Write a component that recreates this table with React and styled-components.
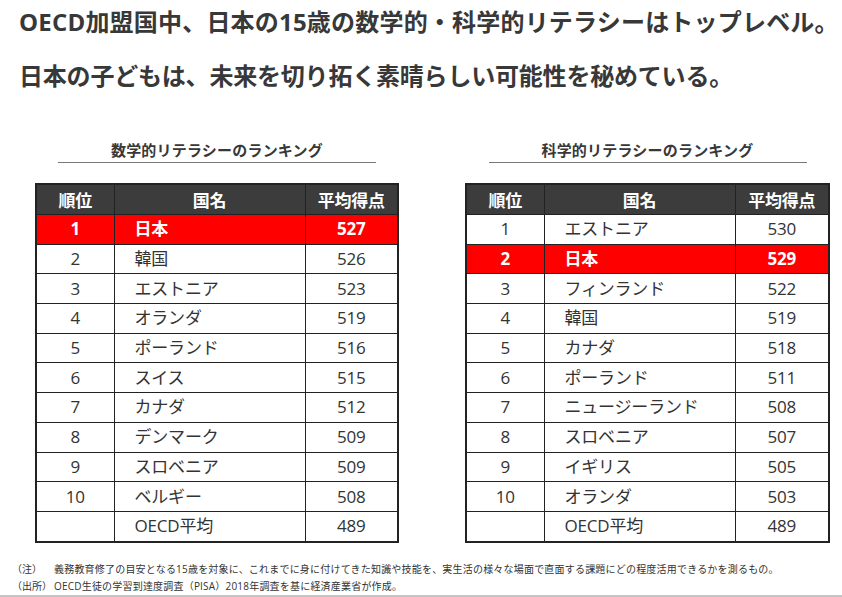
import React from "react"
import styled, { createGlobalStyle } from "styled-components"

const Global = createGlobalStyle`
  html, body {
    margin: 0;
    padding: 0;
    background: #fff;
  }
  body {
    font-family: "Open Sans", "Noto Sans CJK JP", sans-serif;
    color: #333;
  }
`

const Page = styled.div`
  width: 842px;
  height: 597px;
  display: flex;
  flex-direction: column;
  overflow: hidden;
`

const Headline = styled.div`
  padding: 5px 0 0 19px;
  display: flex;
  flex-direction: column;
  gap: 20px;
`

const HeadLine = styled.div`
  font-size: 24px;
  line-height: 34px;
  font-weight: 700;
  color: #383838;
  letter-spacing: ${(p) => p.ls}px;
  white-space: nowrap;
`

const Columns = styled.div`
  display: flex;
  gap: 66px;
  padding-left: 35px;
  margin-top: 47px;
`

const Group = styled.div`
  width: ${(p) => p.w}px;
  display: flex;
  flex-direction: column;
  align-items: center;
`

const GroupTitle = styled.div`
  width: 318px;
  text-align: center;
  font-size: 15px;
  line-height: 20px;
  font-weight: 700;
  color: #383838;
  padding-bottom: 2px;
  border-bottom: 1.5px solid #777;
  letter-spacing: 0.2px;
`

const Table = styled.table`
  margin-top: 20px;
  width: 100%;
  border-collapse: collapse;
  border: 2px solid #222;
  table-layout: fixed;
  font-size: 17px;
`

const Th = styled.th`
  height: 29px;
  padding: 0;
  background: #3c3c3c;
  color: #fff;
  font-weight: 700;
  border: 1px solid #222;
  text-align: center;
  letter-spacing: -0.3px;
`

const Tr = styled.tr`
  background: ${(p) => (p.hl ? "#ff0000" : "#fff")};
  color: ${(p) => (p.hl ? "#fff" : "#333")};
  font-weight: ${(p) => (p.hl ? 700 : 400)};
`

const Td = styled.td`
  height: 28.7px;
  padding: 0;
  padding-left: ${(p) => (p.left ? "20px" : "0")};
  border: 1px solid #222;
  text-align: ${(p) => (p.left ? "left" : "center")};
  line-height: 20px;
  letter-spacing: -0.2px;
`

const Notes = styled.div`
  margin-top: 18px;
  padding-left: 12px;
  font-size: 10px;
  line-height: 17px;
  color: #333;
  letter-spacing: 0.2px;
`

const Note = styled.div`
  display: flex;
  white-space: nowrap;
`

const NoteLabel = styled.span`
  width: 42px;
  flex: none;
  letter-spacing: 0;
`

const BottomBar = styled.div`
  margin-top: auto;
  height: 4px;
  background: #c4c4c4;
`

const math = [
  ["1", "日本", "527", true],
  ["2", "韓国", "526"],
  ["3", "エストニア", "523"],
  ["4", "オランダ", "519"],
  ["5", "ポーランド", "516"],
  ["6", "スイス", "515"],
  ["7", "カナダ", "512"],
  ["8", "デンマーク", "509"],
  ["9", "スロベニア", "509"],
  ["10", "ベルギー", "508"],
  ["", "OECD平均", "489"],
]

const science = [
  ["1", "エストニア", "530"],
  ["2", "日本", "529", true],
  ["3", "フィンランド", "522"],
  ["4", "韓国", "519"],
  ["5", "カナダ", "518"],
  ["6", "ポーランド", "511"],
  ["7", "ニュージーランド", "508"],
  ["8", "スロベニア", "507"],
  ["9", "イギリス", "505"],
  ["10", "オランダ", "503"],
  ["", "OECD平均", "489"],
]

const Ranking = ({ title, rows, w }) => (
  <Group w={w}>
    <GroupTitle>{title}</GroupTitle>
    <Table>
      <colgroup>
        <col style={{ width: 78 }} />
        <col style={{ width: 191 }} />
        <col />
      </colgroup>
      <thead>
        <tr>
          <Th>順位</Th>
          <Th>国名</Th>
          <Th>平均得点</Th>
        </tr>
      </thead>
      <tbody>
        {rows.map(([rank, name, score, hl]) => (
          <Tr key={name} hl={hl ? 1 : 0}>
            <Td>{rank}</Td>
            <Td left={1}>{name}</Td>
            <Td>{score}</Td>
          </Tr>
        ))}
      </tbody>
    </Table>
  </Group>
)

const App = () => {
  return (
    <>
      <Global />
      <Page>
        <Headline>
          <HeadLine ls={0.2}>OECD加盟国中、日本の15歳の数学的・科学的リテラシーはトップレベル。</HeadLine>
          <HeadLine ls={-0.2}>日本の子どもは、未来を切り拓く素晴らしい可能性を秘めている。</HeadLine>
        </Headline>
        <Columns>
          <Ranking title="数学的リテラシーのランキング" rows={math} w={364} />
          <Ranking title="科学的リテラシーのランキング" rows={science} w={365} />
        </Columns>
        <Notes>
          <Note>
            <NoteLabel>（注）</NoteLabel>
            義務教育修了の目安となる15歳を対象に、これまでに身に付けてきた知識や技能を、実生活の様々な場面で直面する課題にどの程度活用できるかを測るもの。
          </Note>
          <Note>
            <NoteLabel>（出所）</NoteLabel>
            OECD生徒の学習到達度調査（PISA）2018年調査を基に経済産業省が作成。
          </Note>
        </Notes>
        <BottomBar />
      </Page>
    </>
  )
}

export default App
